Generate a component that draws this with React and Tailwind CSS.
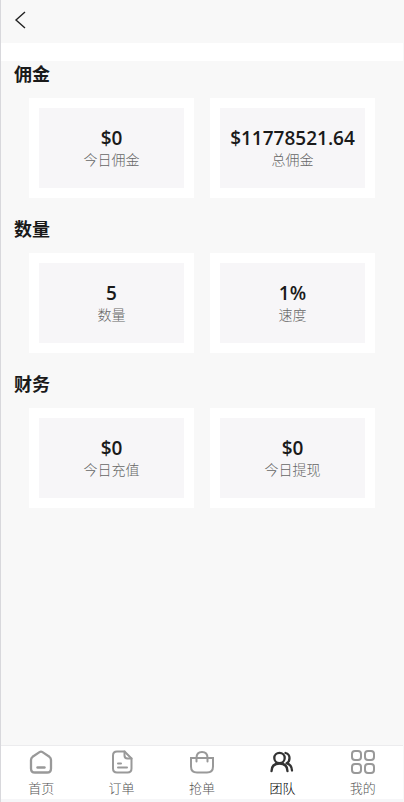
import React, { useState } from "react";

const sections = [
  {
    title: "佣金",
    cards: [
      { value: "$0", label: "今日佣金" },
      { value: "$11778521.64", label: "总佣金" },
    ],
  },
  {
    title: "数量",
    cards: [
      { value: "5", label: "数量" },
      { value: "1%", label: "速度" },
    ],
  },
  {
    title: "财务",
    cards: [
      { value: "$0", label: "今日充值" },
      { value: "$0", label: "今日提现" },
    ],
  },
];

function Icon({ children }) {
  return (
    <svg
      viewBox="0 0 26 26"
      className="h-[26px] w-[26px]"
      fill="none"
      stroke="currentColor"
      strokeWidth="2"
      strokeLinecap="round"
      strokeLinejoin="round"
      aria-hidden="true"
    >
      {children}
    </svg>
  );
}

const HomeIcon = () => (
  <Icon>
    <path
      strokeWidth="2.3"
      d="M11.5 3.1 4.6 7.8Q3 9 3 11v8.4Q3 23.5 7 23.5h12q4 0 4-4.1V11q0-2-1.600-3.200l-6.900-4.700q-1.500-1-3 0Z"
    />
    <path strokeWidth="2.4" d="M9.5 18.500h7" />
  </Icon>
);

const OrderIcon = () => (
  <Icon>
    <path d="M15.5 2.500H8Q4 2.500 4 6.500v13q0 4 4 4h10.500q4 0 4-4V9.500Z" />
    <path d="M15.500 2.500v4q0 3 3 3h4" />
    <path d="M9 14.500h3M9 18.500h9" />
  </Icon>
);

const BagIcon = () => (
  <Icon>
    <path strokeLinejoin="miter" d="M2 9h22v8.500q0 6-6 6H8q-6 0-6-6Z" />
    <path d="M7.500 12.500V9q0-6 5.500-6t5.500 6v3.500" />
  </Icon>
);

const TeamIcon = () => (
  <Icon>
    <circle cx="10.5" cy="9" r="5.200" strokeWidth="2.300" />
    <path strokeWidth="2.300" d="M2.500 22.200q0-7.700 8-7.700t8 7.700" />
    <path
      strokeWidth="2.300"
      d="M16.500 4q4 1 4 5t-3 5.200q5.300 1.800 5.500 7.300"
    />
  </Icon>
);

const MineIcon = () => (
  <Icon>
    <rect x="2" y="2" width="9" height="9" rx="3" />
    <rect x="15" y="2" width="9" height="9" rx="3" />
    <rect x="2" y="15" width="9" height="9" rx="3" />
    <rect x="15" y="15" width="9" height="9" rx="3" />
  </Icon>
);

const tabs = [
  { name: "首页", icon: HomeIcon },
  { name: "订单", icon: OrderIcon },
  { name: "抢单", icon: BagIcon },
  { name: "团队", icon: TeamIcon },
  { name: "我的", icon: MineIcon },
];

function StatCard({ value, label }) {
  return (
    <div className="bg-white p-2.5">
      <div className="flex h-20 flex-col items-center justify-center bg-[#f7f6f8]">
        <span className="text-[19px] leading-6 font-semibold text-[#1a1a1a]">
          {value}
        </span>
        <span className="text-sm leading-5 font-light text-[#666]">
          {label}
        </span>
      </div>
    </div>
  );
}

function App() {
  const [active, setActive] = useState("团队");

  return (
    <div className="flex min-h-screen flex-col border-x border-l-[#d8d8dc] border-r-[#f8f8f8] bg-[#f8f8f8] font-['Open_Sans','Noto_Sans_CJK_SC',sans-serif]">
      <header className="flex h-[43px] items-center px-3 pb-1">
        <button type="button" aria-label="返回" className="text-[#222]">
          <svg
            viewBox="0 0 16 20"
            className="h-5 w-4"
            fill="none"
            stroke="currentColor"
            strokeWidth="1.4"
            aria-hidden="true"
          >
            <path d="M12 2 3 10l9 8" />
          </svg>
        </button>
      </header>
      <div className="h-[18px] bg-white" />

      <main className="flex-1">
        {sections.map((section) => (
          <section key={section.title} className="pb-[18px]">
            <h2 className="pl-[13px] text-lg leading-[26px] font-bold text-[#1a1a1a]">
              {section.title}
            </h2>
            <div className="mt-[11px] grid grid-cols-2 gap-4 px-7">
              {section.cards.map((card) => (
                <StatCard key={card.label} {...card} />
              ))}
            </div>
          </section>
        ))}
      </main>

      <nav className="sticky bottom-0 border-t border-[#ececee] border-b-[3px] border-b-[#f6f6f8] bg-white">
        <ul className="grid grid-cols-5">
          {tabs.map(({ name, icon: TabIcon }) => (
            <li key={name}>
              <button
                type="button"
                onClick={() => setActive(name)}
                className={`flex w-full flex-col items-center pt-[3px] pb-0.5 ${
                  active === name ? "text-[#333]" : "text-[#999]"
                }`}
              >
                <TabIcon />
                <span
                  className={`mt-1 text-[13px] leading-[18px] font-light ${
                    active === name ? "text-black" : "text-[#555]"
                  }`}
                >
                  {name}
                </span>
              </button>
            </li>
          ))}
        </ul>
      </nav>
    </div>
  );
}

export default App;
